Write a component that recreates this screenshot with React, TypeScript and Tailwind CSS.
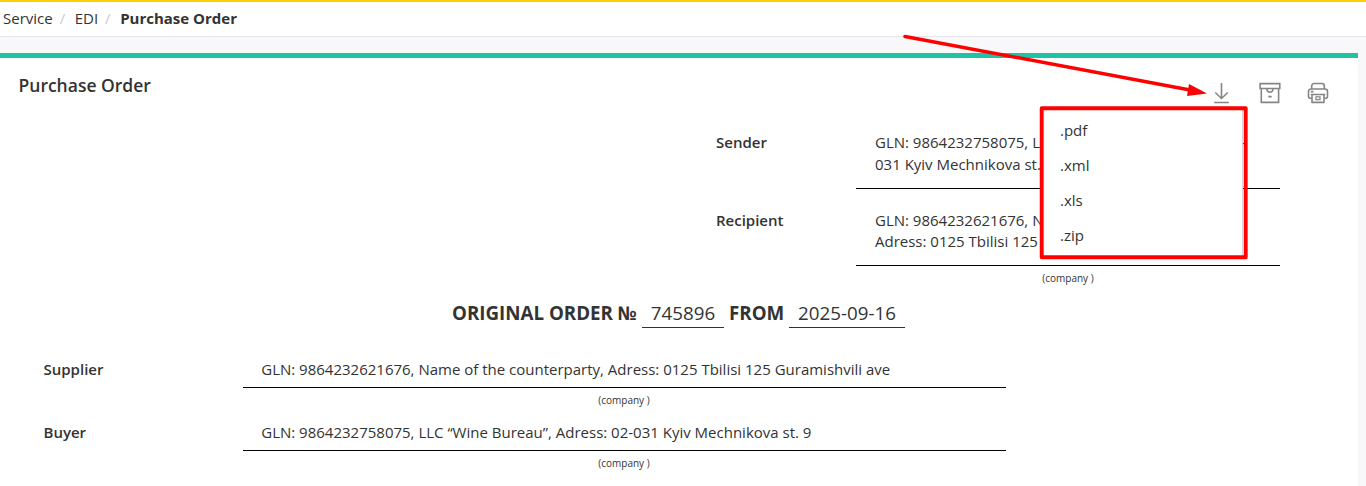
import type { ReactNode } from "react";

const formats = [".pdf", ".xml", ".xls", ".zip"];

function DownloadIcon() {
  return (
    <svg width="22" height="22" viewBox="0 0 22 22" fill="none" stroke="#858585" strokeWidth="1.6">
      <path d="M10.500 1v15.300M4.300 10.500l6.200 6 6.200-6M3.200 20.500h14.600" />
    </svg>
  );
}

function ArchiveIcon() {
  return (
    <svg width="22" height="22" viewBox="0 0 22 22" fill="none" stroke="#858585" strokeWidth="1.6">
      <path d="M1.100 1.600h19.700v4.900H1.100zM2.300 6.500v13.900h17.300v-13.900M7.800 6.500c.3 5 6 5 6.300 0M9.300 14.600h3.400" />
    </svg>
  );
}

function PrinterIcon() {
  return (
    <svg width="22" height="22" viewBox="0 0 22 22" fill="none" stroke="#858585" strokeWidth="1.6" strokeLinejoin="round">
      <path d="M4.700 7V4a2.500 2.500 0 0 1 2.500-2.500h7.600A2.500 2.500 0 0 1 17.300 4v3" />
      <path d="M4.700 16.300H3.500a2 2 0 0 1-2-2V9.500a2.500 2.500 0 0 1 2.500-2.500h14a2.500 2.500 0 0 1 2.500 2.500v4.800a2 2 0 0 1-2 2h-1.200" />
      <path d="M3.700 12.500h14.600M5 12.500v7.900h12v-7.900M3.800 9.600h2.700" />
      <path strokeWidth="1.200" d="M8.300 14.800h5.400M8.300 17.700h5.400M9 14.800v2.900M13 14.800v2.900" />
    </svg>
  );
}

function PartyRow({ label, children }: { label: string; children: ReactNode }) {
  return (
    <div className="flex h-[63px]">
      <div className="w-[200px] pl-[0.5px] pt-0.5 font-semibold leading-[22px]">{label}</div>
      <div className="w-[763px]">
        <div className="h-8 border-b border-black pl-[18.25px] pt-0.5 leading-[22px]">{children}</div>
        <div className="pr-px pt-1 text-center text-[10px] leading-4">(company )</div>
      </div>
    </div>
  );
}

export default function App() {
  return (
    <div className="relative h-[486px] w-[1366px] overflow-hidden bg-[#f8f8fb] font-['Open_Sans',sans-serif] text-[15px] text-[#333333]">
      <nav className="flex h-[37px] items-center border-b border-t-2 border-b-[#e4e6eb] border-t-[#ffd000] bg-white pb-0.5 pl-[3px] text-[15px] leading-5">
        <span>Service</span>
        <span className="ml-[7px] text-[#cccccc]">/</span>
        <span className="ml-[9.5px]">EDI</span>
        <span className="ml-[7px] text-[#cccccc]">/</span>
        <span className="ml-[9.5px] font-bold">Purchase Order</span>
      </nav>

      <main className="mt-4 h-[433px] w-[1358px] border-t-[5px] border-[#1fc3a3] bg-white">
        <header className="flex h-[73px] justify-between pl-[18.5px] pr-[29px]">
          <h1 className="pt-[15px] text-[17.5px] font-semibold leading-6">Purchase Order</h1>
          <div className="flex gap-[26px] pt-6">
            <DownloadIcon />
            <ArchiveIcon />
            <PrinterIcon />
          </div>
        </header>

        <section className="ml-[716px] w-[564px]">
          <div className="flex h-[78px]">
            <div className="w-[140px] font-semibold leading-[22px]">Sender</div>
            <div className="h-[58px] w-[424px] border-b border-black pl-[19px] leading-[22px]">
              GLN: 9864232758075, LLC “Wine Bureau”, Adress: 02-
              <br />
              031 Kyiv Mechnikova st. 9
            </div>
          </div>
          <div className="flex h-[85px]">
            <div className="w-[140px] font-semibold leading-[22px]">Recipient</div>
            <div className="w-[424px]">
              <div className="h-[57px] border-b border-black pl-[19px] pt-px leading-[21px]">
                GLN: 9864232621676, Name of the counterparty,
                <br />
                Adress: 0125 Tbilisi 125 Guramishvili ave
              </div>
              <div className="pt-1 text-center text-[10px] leading-4">(company )</div>
            </div>
          </div>
        </section>

        <h2 className="flex h-[62px] pl-[452px] pt-[5px] text-[18.75px] leading-7">
          <span className="w-[185px] whitespace-nowrap font-bold">ORIGINAL ORDER №</span>
          <span className="ml-[5px] h-[29px] w-[82px] border-b border-[#333333] text-center">745896</span>
          <span className="ml-[5px] w-[55px] font-bold">FROM</span>
          <span className="ml-[5px] h-[29px] w-[116px] border-b border-[#333333] text-center">2025-09-16</span>
        </h2>

        <section className="pl-[43px]">
          <PartyRow label="Supplier">
            GLN: 9864232621676, Name of the counterparty, Adress: 0125 Tbilisi 125 Guramishvili ave
          </PartyRow>
          <PartyRow label="Buyer">
            GLN: 9864232758075, LLC “Wine Bureau”, Adress: 02-031 Kyiv Mechnikova st. 9
          </PartyRow>
        </section>
      </main>

      <ul className="absolute left-[1041px] top-[108px] h-[149px] w-[202px] border-r border-[#d5d5da] bg-white pl-[19px] pt-[5px]">
        {formats.map((format) => (
          <li key={format} className="h-[35px] leading-[35px]">
            {format}
          </li>
        ))}
      </ul>

      <svg className="pointer-events-none absolute left-[895px] top-[30px]" width="360" height="235" viewBox="895 30 360 235">
        <rect x="1041.700" y="108.300" width="204" height="149" fill="none" stroke="#ff0000" strokeWidth="3.900" strokeLinejoin="round" />
        <path d="M905 36.500L1190 90" stroke="#ff0000" strokeWidth="3.500" strokeLinecap="round" />
        <path d="M1189 84L1207 93.500L1187 96z" fill="#ff0000" />
      </svg>
    </div>
  );
}
